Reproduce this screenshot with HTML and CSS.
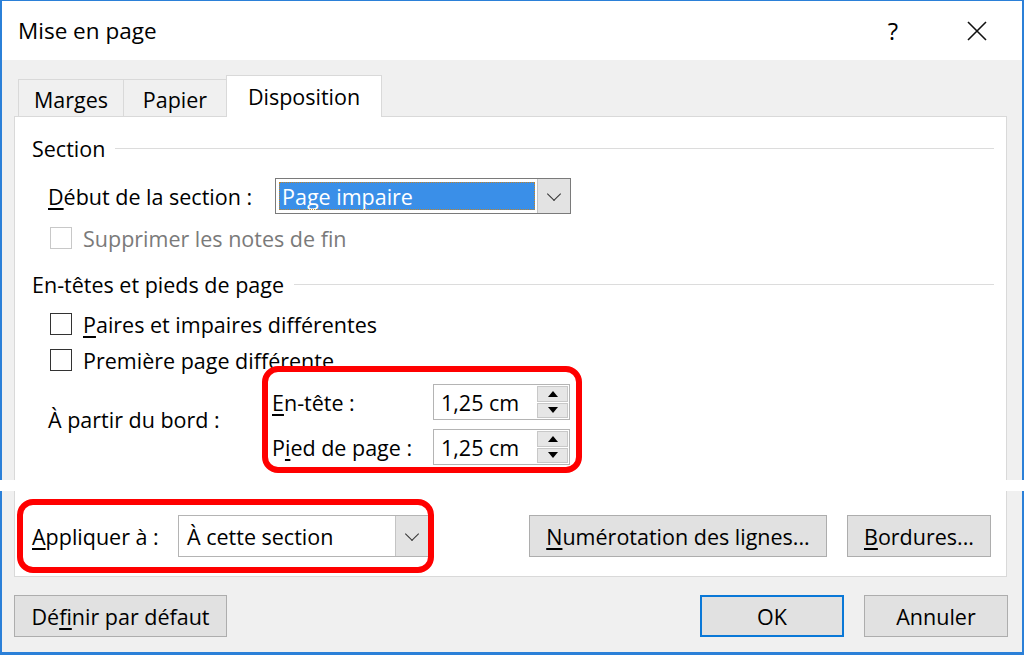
FILE: index.html
```html
<!DOCTYPE html>
<html lang="fr">
<head>
  <meta charset="UTF-8" />
  <title>Mise en page</title>
  <link rel="stylesheet" href="styles.css">
</head>
<body>

<div class="window">
  <div class="win-top">
    <div class="titlebar">
      <span class="title">Mise en page</span>
      <span class="help">?</span>
      <svg class="close" viewBox="0 0 22 22"><path d="M2 2 L20 20 M20 2 L2 20" /></svg>
    </div>

    <div class="client">
      <div class="tabs">
        <div class="tab tab-marges">Marges</div>
        <div class="tab tab-papier">Papier</div>
        <div class="tab tab-dispo active">Disposition</div>
      </div>

      <div class="panel panel-top">
        <div class="group-title"><span>Section</span><i class="rule"></i></div>

        <div class="row-start">
          <label class="lbl-start"><u>D</u>ébut de la section :</label>
          <div class="combo combo-start">
            <div class="combo-value">Page impaire</div>
            <div class="combo-btn"><i class="chevron"></i></div>
          </div>
        </div>

        <div class="check-row disabled row-suppr">
          <span class="box"></span><span>Supprimer les notes de fin</span>
        </div>

        <div class="group-title group-hf"><span>En-têtes et pieds de page</span><i class="rule"></i></div>

        <div class="check-row row-paires">
          <span class="box"></span><span><u>P</u>aires et impaires différentes</span>
        </div>
        <div class="check-row row-premiere">
          <span class="box"></span><span>Première pa<u>g</u>e différente</span>
        </div>

        <div class="edge-row">
          <label class="edge-label">À partir du bord :</label>
          <div class="mark mark-edge">
            <div class="spin-row">
              <label><u>E</u>n-tête :</label>
              <div class="spin">
                <div class="spin-value">1,25 cm</div>
                <div class="spin-btns"><span class="up"></span><span class="down"></span></div>
              </div>
            </div>
            <div class="spin-row">
              <label>P<u>i</u>ed de page :</label>
              <div class="spin">
                <div class="spin-value">1,25 cm</div>
                <div class="spin-btns"><span class="up"></span><span class="down"></span></div>
              </div>
            </div>
          </div>
        </div>
      </div>
    </div>
  </div>

  <div class="cut"></div>

  <div class="win-bottom">
    <div class="panel panel-bottom">
      <div class="mark mark-apply">
        <label class="lbl-apply"><u>A</u>ppliquer à :</label>
        <div class="combo combo-apply">
          <div class="combo-value">À cette section</div>
          <div class="combo-btn"><i class="chevron"></i></div>
        </div>
      </div>
      <div class="btn-pair">
        <button class="btn btn-num"><u>N</u>umérotation des lignes...</button>
        <button class="btn btn-bord"><u>B</u>ordures...</button>
      </div>
    </div>

    <div class="footer">
      <button class="btn btn-default">Dé<u>f</u>inir par défaut</button>
      <span class="spacer"></span>
      <button class="btn btn-ok">OK</button>
      <button class="btn btn-cancel">Annuler</button>
    </div>
  </div>
</div>

</body>
</html>
```

FILE: styles.css
```css
body {
  margin: 0;
  background: #fff;
  font-family: "Open Sans", "Noto Sans", sans-serif;
  font-size: 21.5px;
  color: #000;
}

u {
  text-underline-offset: 3px;
}

.window {
  width: 1024px;
}

/* partie haute de la fenêtre */
.win-top {
  height: 480px;
  box-sizing: border-box;
  border: 2px solid #2b80d8;
  border-top-width: 1px;
  border-bottom: 0;
  display: flex;
  flex-direction: column;
}

.titlebar {
  height: 59px;
  flex: 0 0 59px;
  background: #fff;
  display: flex;
  align-items: center;
  padding-left: 16px;
}

.title {
  flex: 1;
  font-size: 22.5px;
}

.help {
  font-size: 24px;
  margin-right: 68px;
}

.close {
  width: 22px;
  height: 22px;
  margin-right: 34px;
  fill: none;
  stroke: #111;
  stroke-width: 1.6;
}

.client {
  flex: 1;
  background: #f0f0f0;
  display: flex;
  flex-direction: column;
  padding: 15px 15px 0 12px;
}

.tabs {
  display: flex;
  align-items: flex-end;
  height: 41px;
  padding-left: 4px;
}

.tab {
  height: 37px;
  box-sizing: border-box;
  border: 1px solid #d9d9d9;
  border-bottom: 0;
  border-right: 0;
  display: flex;
  align-items: center;
  justify-content: center;
  padding-top: 2px;
}

.tab-marges { width: 105px; }
.tab-papier { width: 103px; }

.tab.active {
  width: 156px;
  height: 42px;
  margin-bottom: -1px;
  background: #fff;
  border-right: 1px solid #d9d9d9;
  position: relative;
  z-index: 1;
  padding-top: 0;
}

.panel {
  background: #fff;
  border: 1px solid #d9d9d9;
}

.panel-top {
  flex: 1;
  border-bottom: 0;
  padding: 19px 12px 0 17px;
  display: flex;
  flex-direction: column;
}

.group-title {
  display: flex;
  align-items: center;
  height: 24px;
  gap: 10px;
}

.rule {
  flex: 1;
  height: 1px;
  background: #dcdcdc;
}

.group-hf { margin-top: 22px; }

.row-start {
  margin-top: 18px;
  padding-left: 16px;
  display: flex;
  align-items: center;
  height: 36px;
}

.lbl-start { width: 227px; }

.combo {
  display: flex;
  box-sizing: border-box;
  background: #fff;
}

.combo-start {
  width: 296px;
  height: 36px;
  border: 1px solid #7a7a7a;
}

.combo-value {
  flex: 1;
  display: flex;
  align-items: center;
}

.combo-start .combo-value {
  margin: 3px 2px 3px 3px;
  padding-left: 3px;
  background: #3a8fe8;
  color: #fff;
  outline: 1px dotted #c0842a;
  outline-offset: -1px;
}

.combo-btn {
  width: 32px;
  background: #e3e3e3;
  border-left: 1px solid #c4c4c4;
  display: flex;
  align-items: center;
  justify-content: center;
}

.chevron {
  width: 9px;
  height: 9px;
  border-right: 1.3px solid #333;
  border-bottom: 1.3px solid #333;
  transform: rotate(45deg);
  margin-top: -5px;
}

.check-row {
  display: flex;
  align-items: center;
  height: 24px;
  padding-left: 18px;
  gap: 11px;
}

.box {
  width: 22px;
  height: 22px;
  box-sizing: border-box;
  border: 1px solid #333;
  background: #fff;
}

.disabled .box { border-color: #c8c8c8; }
.disabled span { color: #7a7a7a; }

.row-suppr { margin-top: 12px; }
.row-paires { margin-top: 16px; }
.row-premiere { margin-top: 12px; }

.edge-row {
  margin-top: -6px;
  padding-left: 16px;
  display: flex;
  align-items: center;
}

.edge-label { width: 214px; }

/* cadres rouges */
.mark {
  border: 6px solid #ff0000;
  border-radius: 16px;
  box-sizing: border-box;
}

.mark-edge {
  width: 320px;
  padding: 12px 6px 2px 4px;
  display: flex;
  flex-direction: column;
  gap: 9px;
}

.spin-row {
  display: flex;
  align-items: center;
  justify-content: space-between;
  height: 36px;
}

.spin {
  display: flex;
  width: 137px;
  height: 36px;
  box-sizing: border-box;
  border: 1px solid #b4b4b4;
  background: #fff;
}

.spin-value {
  flex: 1;
  padding-left: 7px;
  display: flex;
  align-items: center;
}

.spin-btns {
  width: 31px;
  display: flex;
  flex-direction: column;
  gap: 1px;
  padding: 1px 1px 1px 0;
}

.spin-btns span {
  flex: 1;
  background: #e6e6e6;
  border: 1px solid #c8c8c8;
  display: flex;
  align-items: center;
  justify-content: center;
}

.up::before,
.down::before {
  content: "";
  border-left: 5px solid transparent;
  border-right: 5px solid transparent;
}

.up::before { border-bottom: 6px solid #000; }
.down::before { border-top: 6px solid #000; }

.cut {
  height: 11px;
  background: #fff;
}

/* partie basse */
.win-bottom {
  height: 164px;
  box-sizing: border-box;
  border: 2px solid #2b80d8;
  border-top: 0;
  border-bottom-width: 3px;
  background: #f0f0f0;
  padding: 0 15px 0 12px;
  display: flex;
  flex-direction: column;
}

.panel-bottom {
  border-top: 0;
  padding: 8px 15px 3px 2px;
  display: flex;
  align-items: center;
  justify-content: space-between;
}

.mark-apply {
  width: 417px;
  height: 74px;
  display: flex;
  align-items: center;
  padding-left: 9px;
}

.lbl-apply { width: 146px; }

.combo-apply {
  width: 250px;
  height: 42px;
  border: 1px solid #b4b4b4;
  border-right: 0;
}

.combo-apply .combo-value { padding-left: 8px; }

.btn-pair {
  display: flex;
  gap: 20px;
}

.btn {
  height: 42px;
  box-sizing: border-box;
  background: #e1e1e1;
  border: 1px solid #adadad;
  font: inherit;
  color: #000;
  padding: 0;
}

.btn-num { width: 298px; }
.btn-bord { width: 144px; }

.footer {
  display: flex;
  padding-top: 18px;
  gap: 20px;
  margin-right: -1px;
}

.spacer { flex: 1; }

.btn-default { width: 213px; }

.btn-ok {
  width: 144px;
  border: 2px solid #0a78d7;
}

.btn-cancel { width: 144px; }
```
